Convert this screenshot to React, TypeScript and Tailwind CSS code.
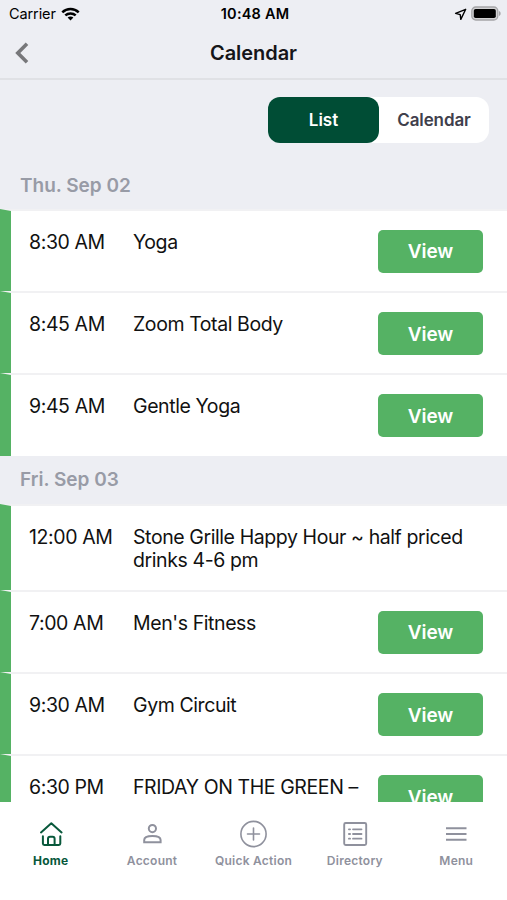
import React from 'react';
interface EventItem {
  time: string;
  title: string;
  titleClass?: string;
  hasView?: boolean;
}
interface DayGroup {
  label: string;
  events: EventItem[];
}
const days: DayGroup[] = [{
  label: 'Thu. Sep 02',
  events: [{
    time: '8:30 AM',
    title: 'Yoga',
    hasView: true
  }, {
    time: '8:45 AM',
    title: 'Zoom Total Body',
    hasView: true
  }, {
    time: '9:45 AM',
    title: 'Gentle Yoga',
    hasView: true
  }]
}, {
  label: 'Fri. Sep 03',
  events: [{
    time: '12:00 AM',
    title: 'Stone Grille Happy Hour ~ half priced drinks 4-6 pm'
  }, {
    time: '7:00 AM',
    title: "Men's Fitness",
    hasView: true
  }, {
    time: '9:30 AM',
    title: 'Gym Circuit',
    hasView: true
  }, {
    time: '6:30 PM',
    title: 'FRIDAY ON THE GREEN –',
    titleClass: 'tracking-[-0.4px]',
    hasView: true
  }]
}];
function StatusBar() {
  return <div className="grid h-7 grid-cols-3 items-center pl-[9px] pr-[6px] text-black">
      <div className="flex items-center gap-[5px]">
        <span className="text-[14.5px] leading-7 tracking-[-0.1px]">Carrier</span>
        <svg width="19" height="14" viewBox="0 0 19 14" fill="none" stroke="currentColor" strokeWidth="2.5">
          <path d="M1.3 5.3C5.9 .9 13.1.9 17.7 5.3" />
          <path d="M4.3 8.4c2.9-2.7 7.5-2.7 10.4 0" />
          <path d="M9.5 13.5 6.6 10.6c1.6-1.5 4.2-1.5 5.8 0Z" fill="currentColor" stroke="none" />
        </svg>
      </div>
      <div className="whitespace-nowrap text-center text-[14.5px] font-semibold leading-7 tracking-[0.2px]">10:48 AM</div>
      <div className="flex items-center justify-end gap-[4px]">
        <svg width="13" height="13" viewBox="0 0 13 13" fill="none" stroke="currentColor" strokeWidth="1.4" strokeLinejoin="round">
          <path d="M11.7 1.3 1.6 5.3l4.6 1.3.6 4.8Z" />
        </svg>
        <svg width="30" height="16" viewBox="0 0 30 16">
          <rect x=".8" y="1" width="26" height="13" rx="4" fill="#d2d2d4" stroke="#a5a5a8" strokeWidth="1.3" />
          <rect x="2.8" y="3" width="22" height="9" rx="1.8" fill="#000" />
          <path d="M28 5c2.2.9 2.2 4 0 4.9Z" fill="#a5a5a8" />
        </svg>
      </div>
    </div>;
}
function Header() {
  return <header className="grid h-[52px] grid-cols-3 items-center border-b-2 border-[#e0e1e5] px-[15px] pb-px">
      <svg width="14" height="22" viewBox="0 0 14 22" fill="none" stroke="#77777a" strokeWidth="3.6">
        <path d="M12 1.8 2.8 11l9.2 9.2" />
      </svg>
      <h1 className="text-center text-[20px] font-semibold tracking-[-0.05px] text-[#151518]">Calendar</h1>
    </header>;
}
function ViewToggle() {
  return <div className="flex justify-end pr-[18px] pt-[17px]">
      <div className="flex h-[46px] w-[221px] rounded-[13px] bg-white text-[17px] font-semibold">
        <button className="w-[111px] rounded-[12px] bg-[#004d35] pt-0.5 text-white">List</button>
        <button className="flex-1 pt-0.5 tracking-[-0.1px] text-[#3f404c]">Calendar</button>
      </div>
    </div>;
}
function EventRow({
  time,
  title,
  titleClass = 'tracking-[-0.41px]',
  hasView
}: EventItem) {
  return <div className={`flex shrink-0 border-l-[11px] border-t-2 border-l-[#55b264] border-t-[#f1f1f3] bg-white pl-[18px] pr-6 text-[19.5px] leading-[23px] text-[#111] ${hasView ? 'h-[82.2px]' : 'h-[86px]'}`}>
      <div className="w-[104px] shrink-0 whitespace-nowrap pt-5 tracking-[-0.4px]">{time}</div>
      <div className={`flex-1 pt-5 ${titleClass}`}>{title}</div>
      {hasView && <button className="mt-[19px] h-[43px] w-[105px] shrink-0 rounded-[5px] bg-[#55b264] pt-px text-[19px] font-semibold tracking-[-0.1px] text-white">
          View
        </button>}
    </div>;
}
function DaySection({
  label,
  events
}: DayGroup) {
  return <section className="shrink-0">
      <h2 className="flex h-[48.3px] items-center pl-5 pt-[2px] text-[19px] font-semibold text-[#989ba6]">{label}</h2>
      {events.map(event => <EventRow key={event.time} {...event} />)}
    </section>;
}
const tabs = [{
  label: 'Home',
  icon: <path d="m3 11.4 10.3-9.1 10.3 9.1M4.900 15.300v7.300q0 1.400 1.400 1.400h14.600q1.400 0 1.400-1.400v-7.300M10 24v-6.200q0-2 2-2h2.600q2 0 2 2V24" strokeWidth="2" />
}, {
  label: 'Account',
  icon: <>
        <circle cx="13.400" cy="7.600" r="3.600" strokeWidth="2" />
        <path d="M5.200 21.200v-2.200c0-5.300 16.400-5.300 16.400 0v2.200Z" strokeWidth="2" strokeLinejoin="miter" />
      </>
}, {
  label: 'Quick Action',
  icon: <>
        <circle cx="13.500" cy="13" r="12.600" />
        <path d="M13.500 7v12M7.500 13h12" />
      </>
}, {
  label: 'Directory',
  icon: <>
        <rect x="2.200" y="2" width="22" height="22" rx="1.500" strokeWidth="1.900" />
        <path d="M6.900 8.300h1.200M6.900 13h1.200M6.900 17.700h1.200M11 8.300h8.500M11 13h8.500M11 17.700h8.500" strokeWidth="1.800" />
      </>
}, {
  label: 'Menu',
  icon: <path d="M3 7.200h20.500M3 13h20.500M3 18.800h20.500" strokeWidth="2" strokeLinecap="butt" />
}];
function TabBar() {
  return <nav className="grid h-[98px] shrink-0 grid-cols-5 bg-white">
      {tabs.map((tab, index) => <button key={tab.label} className={`flex flex-col items-center pt-[19px] ${index === 0 ? 'text-[#08583b]' : 'text-[#8f919d]'}`}>
          <svg className="overflow-visible" width="26" height="26" viewBox="0 0 26 26" fill="none" stroke="currentColor" strokeWidth="1.6" strokeLinecap="round" strokeLinejoin="round">
            {tab.icon}
          </svg>
          <span className={`mt-[6px] whitespace-nowrap text-[12px] leading-4 tracking-[0.25px] ${index === 0 ? 'font-bold' : 'font-semibold'}`}>{tab.label}</span>
        </button>)}
    </nav>;
}
export default function App() {
  return <div className="flex h-[900px] w-[507px] flex-col overflow-hidden bg-[#edeef3] font-['Inter','Liberation_Sans',sans-serif]">
      <StatusBar />
      <Header />
      <main className="flex min-h-0 flex-1 flex-col overflow-hidden">
        <ViewToggle />
        <div className="pt-[17.7px]">
          {days.map(day => <DaySection key={day.label} {...day} />)}
        </div>
      </main>
      <TabBar />
    </div>;
}
